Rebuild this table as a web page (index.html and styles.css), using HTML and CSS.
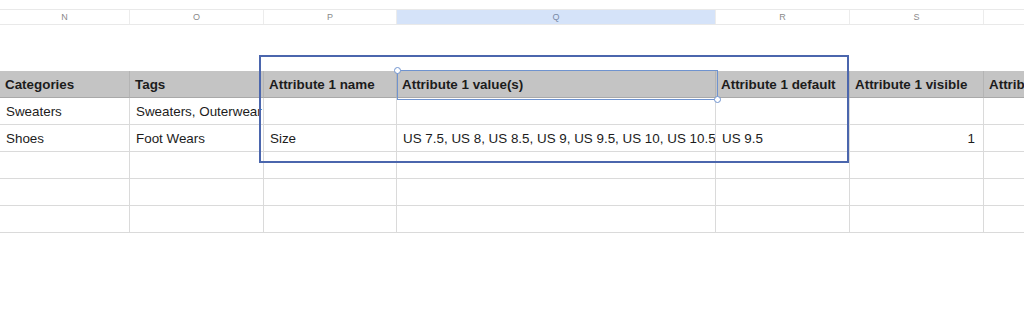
FILE: index.html
```html
<!DOCTYPE html>
<html>
<head>
    <meta charset="utf-8">
    <link rel="stylesheet" href="styles.css">
    <title>Products sheet</title>
</head>
<body>
    <div class="sheet">
        <!-- column letters -->
        <div class="col-heads row">
            <div class="letter">N</div>
            <div class="letter">O</div>
            <div class="letter">P</div>
            <div class="letter active">Q</div>
            <div class="letter">R</div>
            <div class="letter">S</div>
            <div class="letter"></div>
        </div>

        <div class="canvas">
            <div class="row head">
                <div class="cell">Categories</div>
                <div class="cell">Tags</div>
                <div class="cell">Attribute 1 name</div>
                <div class="cell">Attribute 1 value(s)</div>
                <div class="cell">Attribute 1 default</div>
                <div class="cell">Attribute 1 visible</div>
                <div class="cell">Attribute 1 global</div>
            </div>
            <div class="row">
                <div class="cell">Sweaters</div>
                <div class="cell">Sweaters, Outerwear</div>
                <div class="cell"></div>
                <div class="cell"></div>
                <div class="cell"></div>
                <div class="cell"></div>
                <div class="cell"></div>
            </div>
            <div class="row">
                <div class="cell">Shoes</div>
                <div class="cell">Foot Wears</div>
                <div class="cell">Size</div>
                <div class="cell">US 7.5, US 8, US 8.5, US 9, US 9.5, US 10, US 10.5</div>
                <div class="cell">US 9.5</div>
                <div class="cell num">1</div>
                <div class="cell"></div>
            </div>
            <div class="row">
                <div class="cell"></div><div class="cell"></div><div class="cell"></div><div class="cell"></div><div class="cell"></div><div class="cell"></div><div class="cell"></div>
            </div>
            <div class="row">
                <div class="cell"></div><div class="cell"></div><div class="cell"></div><div class="cell"></div><div class="cell"></div><div class="cell"></div><div class="cell"></div>
            </div>
            <div class="row">
                <div class="cell"></div><div class="cell"></div><div class="cell"></div><div class="cell"></div><div class="cell"></div><div class="cell"></div><div class="cell"></div>
            </div>

            <!-- selection overlays -->
            <div class="sel-range"></div>
            <div class="sel-cell">
                <span class="handle tl"></span>
                <span class="handle br"></span>
            </div>
        </div>
    </div>
</body>
</html>
```

FILE: styles.css
```css
body {
    margin: 0;
    background: #fff;
    font-family: "Liberation Sans", Arial, sans-serif;
    color: #1c1c1c;
    overflow: hidden;
}
.sheet {
    width: 1024px;
    overflow: hidden;
    padding-top: 9px;
}
.row {
    display: grid;
    grid-template-columns: 130px 134px 133px 319px 134px 134px 134px;
}
.col-heads {
    height: 16px;
    border-top: 1px solid #e9e9e9;
    border-bottom: 1px solid #e9e9e9;
    box-sizing: border-box;
}
.letter {
    font-size: 9px;
    color: #8a8a8a;
    text-align: center;
    line-height: 14px;
    border-right: 1px solid #ececec;
}
.letter.active {
    background: #d5e3f9;
    color: #7a8aa6;
}
.canvas {
    position: relative;
    margin-top: 46px;
}
.cell {
    height: 27px;
    box-sizing: border-box;
    border-right: 1px solid #dadada;
    border-bottom: 1px solid #dadada;
    padding: 0 6px 0 6px;
    font-size: 13.4px;
    line-height: 27px;
    white-space: nowrap;
    overflow: hidden;
}
.head .cell {
    background: #c4c4c4;
    font-weight: bold;
    border-right-color: #b4b4b4;
    border-bottom-color: #a9a9a9;
    padding-left: 5px;
}
.cell.num {
    text-align: right;
    padding-right: 8px;
}
.sel-range {
    position: absolute;
    left: 259px;
    top: -16px;
    width: 590px;
    height: 108px;
    box-sizing: border-box;
    border: 2px solid #4b66ad;
}
.sel-cell {
    position: absolute;
    left: 397px;
    top: -1px;
    width: 321px;
    height: 30px;
    box-sizing: border-box;
    border: 1px solid #6f93cf;
}
.handle {
    position: absolute;
    width: 5px;
    height: 5px;
    border-radius: 50%;
    background: #fff;
    border: 1px solid #6f93cf;
}
.handle.tl {
    left: -4px;
    top: -4px;
}
.handle.br {
    right: -4px;
    bottom: -4px;
}
```
